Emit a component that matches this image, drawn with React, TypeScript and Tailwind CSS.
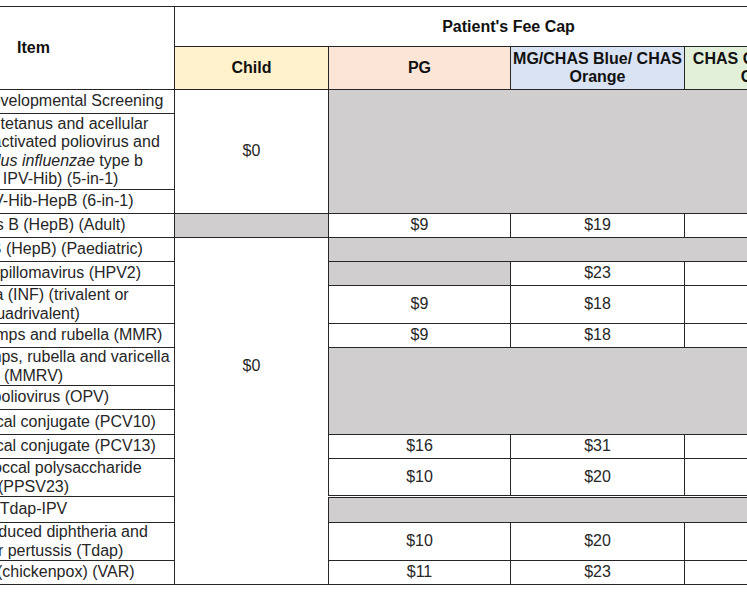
import React from "react";

const cell = "border border-[#262626] p-0 text-center align-middle";
const gray = "bg-[#d0cece]";

type Row = {
  h: string;
  item: React.ReactNode;
  cells: React.ReactNode;
};

const rows: Row[] = [
  {
    h: "h-[24px]",
    item: "Childhood Developmental Screening",
    cells: (
      <>
        <td rowSpan={3} className={cell}>$0</td>
        <td rowSpan={3} colSpan={3} className={`${cell} ${gray}`}></td>
      </>
    ),
  },
  {
    h: "h-[76px]",
    item: (
      <>
        Diphtheria, tetanus and acellular
        <br />
        pertussis, inactivated poliovirus and
        <br />
        <i>Haemophilus influenzae</i> type b
        <br />
        (DTaP- IPV-Hib) (5-in-1)
      </>
    ),
    cells: null,
  },
  { h: "h-[24px]", item: "DTaP-IPV-Hib-HepB (6-in-1)", cells: null },
  {
    h: "h-[24px]",
    item: "Hepatitis B (HepB) (Adult)",
    cells: (
      <>
        <td className={`${cell} ${gray}`}></td>
        <td className={cell}>$9</td>
        <td className={cell}>$19</td>
        <td className={cell}></td>
      </>
    ),
  },
  {
    h: "h-[24px]",
    item: "Hepatitis B (HepB) (Paediatric)",
    cells: (
      <>
        <td rowSpan={12} className={`${cell} !align-top pt-[119px]`}>$0</td>
        <td colSpan={3} className={`${cell} ${gray}`}></td>
      </>
    ),
  },
  {
    h: "h-[24px]",
    item: "Human papillomavirus (HPV2)",
    cells: (
      <>
        <td className={`${cell} ${gray}`}></td>
        <td className={cell}>$23</td>
        <td className={cell}></td>
      </>
    ),
  },
  {
    h: "h-[38px]",
    item: (
      <>
        Influenza (INF) (trivalent or
        <br />
        quadrivalent)
      </>
    ),
    cells: (
      <>
        <td className={cell}>$9</td>
        <td className={cell}>$18</td>
        <td className={cell}></td>
      </>
    ),
  },
  {
    h: "h-[24px]",
    item: "Measles, mumps and rubella (MMR)",
    cells: (
      <>
        <td className={cell}>$9</td>
        <td className={cell}>$18</td>
        <td className={cell}></td>
      </>
    ),
  },
  {
    h: "h-[38px]",
    item: (
      <>
        Measles, mumps, rubella and varicella
        <br />
        (MMRV)
      </>
    ),
    cells: <td rowSpan={3} colSpan={3} className={`${cell} ${gray}`}></td>,
  },
  { h: "h-[24px]", item: "Oral poliovirus (OPV)", cells: null },
  { h: "h-[25px]", item: "Pneumococcal conjugate (PCV10)", cells: null },
  {
    h: "h-[24px]",
    item: "Pneumococcal conjugate (PCV13)",
    cells: (
      <>
        <td className={cell}>$16</td>
        <td className={cell}>$31</td>
        <td className={cell}></td>
      </>
    ),
  },
  {
    h: "h-[38px]",
    item: (
      <>
        Pneumococcal polysaccharide
        <br />
        (PPSV23)
      </>
    ),
    cells: (
      <>
        <td className={cell}>$10</td>
        <td className={cell}>$20</td>
        <td className={cell}></td>
      </>
    ),
  },
  {
    h: "h-[26px]",
    item: "Tdap-IPV",
    cells: (
      <td
        colSpan={3}
        className={`${cell} ${gray} border-t-[3px] border-t-double`}
        style={{ borderTopStyle: "double" }}
      ></td>
    ),
  },
  {
    h: "h-[38px]",
    item: (
      <>
        Tetanus, reduced diphtheria and
        <br />
        acellular pertussis (Tdap)
      </>
    ),
    cells: (
      <>
        <td className={cell}>$10</td>
        <td className={cell}>$20</td>
        <td className={cell}></td>
      </>
    ),
  },
  {
    h: "h-[24px]",
    item: "Varicella (chickenpox) (VAR)",
    cells: (
      <>
        <td className={cell}>$11</td>
        <td className={cell}>$23</td>
        <td className={cell}></td>
      </>
    ),
  },
];

export default function App() {
  return (
    <div className="w-[747px] h-[598px] overflow-hidden bg-white pt-[6px] font-['Liberation_Sans',Arial,sans-serif] text-[16px] leading-[18.5px] text-[#262626]">
      <table className="ml-[-108px] w-[950px] table-fixed border-collapse">
        <colgroup>
          <col className="w-[282px]" />
          <col className="w-[154px]" />
          <col className="w-[182px]" />
          <col className="w-[174px]" />
          <col className="w-[158px]" />
        </colgroup>
        <thead className="font-bold text-[#111]">
          <tr className="h-[40px]">
            <th rowSpan={2} className={cell}>Item</th>
            <th colSpan={4} className={`${cell} pt-[2px]`}>Patient's Fee Cap</th>
          </tr>
          <tr className="h-[43px]">
            <th className={`${cell} bg-[#fff2cc]`}>Child</th>
            <th className={`${cell} bg-[#fbe5d6]`}>PG</th>
            <th className={`${cell} bg-[#dae3f3] whitespace-nowrap`}>
              MG/CHAS Blue/ CHAS
              <br />
              Orange
            </th>
            <th className={`${cell} bg-[#e2f0d9] whitespace-nowrap`}>
              CHAS Green/ Non-
              <br />
              CHAS
            </th>
          </tr>
        </thead>
        <tbody>
          {rows.map((r, i) => (
            <tr key={i} className={r.h}>
              <td className={`${cell} whitespace-nowrap`}>{r.item}</td>
              {r.cells}
            </tr>
          ))}
        </tbody>
      </table>
    </div>
  );
}
